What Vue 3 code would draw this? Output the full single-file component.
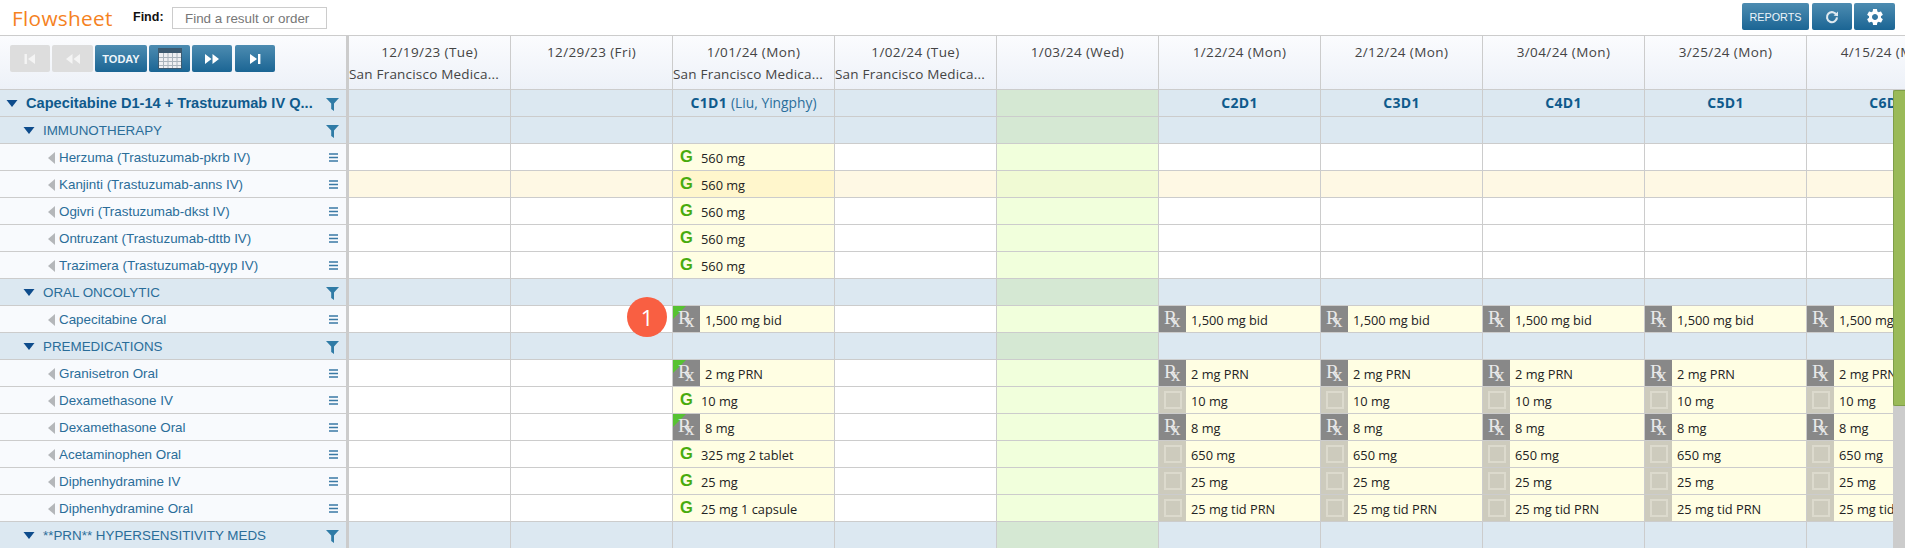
<script setup>
const dates = [
  { d: '12/19/23 (Tue)', s: 'San Francisco Medica...' },
  { d: '12/29/23 (Fri)' },
  { d: '1/01/24 (Mon)', s: 'San Francisco Medica...' },
  { d: '1/02/24 (Tue)', s: 'San Francisco Medica...' },
  { d: '1/03/24 (Wed)' },
  { d: '1/22/24 (Mon)' },
  { d: '2/12/24 (Mon)' },
  { d: '3/04/24 (Mon)' },
  { d: '3/25/24 (Mon)' },
  { d: '4/15/24 (Mon)' }
]
const TODAY = 4
const later = [5, 6, 7, 8, 9]

function fill(first, kind, text) {
  const cells = {}
  cells[2] = first
  later.forEach((i) => { if (kind) cells[i] = { k: kind, t: text } })
  return cells
}

const cyc = { 2: { cycle: 'C1D1', by: '(Liu, Yingphy)' } }
later.forEach((i, n) => { cyc[i] = { cycle: `C${n + 2}D1` } })

const rows = [
  { type: 'top', label: 'Capecitabine D1-14 + Trastuzumab IV Q...', cells: cyc },
  { type: 'group', label: 'IMMUNOTHERAPY', cells: {} },
  { type: 'drug', label: 'Herzuma (Trastuzumab-pkrb IV)', cells: { 2: { k: 'g', t: '560 mg' } } },
  { type: 'drug', label: 'Kanjinti (Trastuzumab-anns IV)', warm: true, cells: { 2: { k: 'g', t: '560 mg' } } },
  { type: 'drug', label: 'Ogivri (Trastuzumab-dkst IV)', cells: { 2: { k: 'g', t: '560 mg' } } },
  { type: 'drug', label: 'Ontruzant (Trastuzumab-dttb IV)', cells: { 2: { k: 'g', t: '560 mg' } } },
  { type: 'drug', label: 'Trazimera (Trastuzumab-qyyp IV)', cells: { 2: { k: 'g', t: '560 mg' } } },
  { type: 'group', label: 'ORAL ONCOLYTIC', cells: {} },
  { type: 'drug', label: 'Capecitabine Oral', cells: fill({ k: 'rxg', t: '1,500 mg bid' }, 'rx', '1,500 mg bid') },
  { type: 'group', label: 'PREMEDICATIONS', cells: {} },
  { type: 'drug', label: 'Granisetron Oral', cells: fill({ k: 'rxg', t: '2 mg PRN' }, 'rx', '2 mg PRN') },
  { type: 'drug', label: 'Dexamethasone IV', cells: fill({ k: 'g', t: '10 mg' }, 'box', '10 mg') },
  { type: 'drug', label: 'Dexamethasone Oral', cells: fill({ k: 'rxg', t: '8 mg' }, 'rx', '8 mg') },
  { type: 'drug', label: 'Acetaminophen Oral', cells: fill({ k: 'g', t: '325 mg 2 tablet' }, 'box', '650 mg') },
  { type: 'drug', label: 'Diphenhydramine IV', cells: fill({ k: 'g', t: '25 mg' }, 'box', '25 mg') },
  { type: 'drug', label: 'Diphenhydramine Oral', cells: fill({ k: 'g', t: '25 mg 1 capsule' }, 'box', '25 mg tid PRN') },
  { type: 'group', label: '**PRN** HYPERSENSITIVITY MEDS', cells: {} }
]
</script>

<template>
  <div class="page">
    <header class="topbar">
      <h1 class="title">Flowsheet</h1>
      <label class="find">Find:</label>
      <input class="search" placeholder="Find a result or order" />
      <div class="top-actions">
        <button class="btn reports">REPORTS</button>
        <button class="btn w40">
          <svg width="14" height="14" viewBox="0 0 14 14" fill="none">
            <path d="M11.6 5.2A5 5 0 1 0 12 7.4" stroke="#dfe9f0" stroke-width="2.1" />
            <path d="M8.6 5.6 L13 6.2 L13 1.4 Z" fill="#dfe9f0" />
          </svg>
        </button>
        <button class="btn w41">
          <svg width="20" height="20" viewBox="0 0 24 24" fill="#fff">
            <path d="M19.14 12.94c.04-.3.06-.61.06-.94 0-.32-.02-.64-.07-.94l2.03-1.58c.18-.14.23-.41.12-.61l-1.92-3.32c-.12-.22-.37-.29-.59-.22l-2.39.96c-.5-.38-1.03-.7-1.62-.94l-.36-2.54c-.04-.24-.24-.41-.48-.41h-3.84c-.24 0-.43.17-.47.41l-.36 2.54c-.59.24-1.13.57-1.62.94l-2.39-.96c-.22-.08-.47 0-.59.22L2.74 8.87c-.12.21-.08.47.12.61l2.03 1.58c-.05.3-.09.63-.09.94s.02.64.07.94l-2.03 1.58c-.18.14-.23.41-.12.61l1.92 3.32c.12.22.37.29.59.22l2.39-.96c.5.38 1.03.7 1.62.94l.36 2.54c.05.24.24.41.48.41h3.84c.24 0 .44-.17.47-.41l.36-2.54c.59-.24 1.13-.56 1.62-.94l2.39.96c.22.08.47 0 .59-.22l1.92-3.32c.12-.22.07-.47-.12-.61l-2.01-1.58zM12 15.6c-1.98 0-3.6-1.62-3.6-3.6s1.62-3.6 3.6-3.6 3.6 1.62 3.6 3.6-1.62 3.6-3.6 3.6z" />
          </svg>
        </button>
      </div>
    </header>

    <div class="sheet">
      <div class="row head">
        <div class="left nav">
          <button class="btn off w40">
            <svg width="12" height="12" viewBox="0 0 12 12" fill="#f4f4f4"><rect x="0.5" y="1" width="2.4" height="10" /><path d="M11 1v10L4 6z" /></svg>
          </button>
          <button class="btn off w41">
            <svg width="16" height="12" viewBox="0 0 16 12" fill="#f4f4f4"><path d="M7.5 1v10L1 6zM15 1v10L8.500 6z" /></svg>
          </button>
          <button class="btn today">TODAY</button>
          <button class="btn w41">
            <svg width="24" height="21" viewBox="0 0 24 21">
              <rect x="0.500" y="0.500" width="23" height="20" fill="#eef0f2" stroke="#3c5a70" />
              <rect x="1" y="1" width="22" height="4" fill="#3c5a70" />
              <path d="M1 9.500h22M1 13.500h22M1 17.500h22M5.500 5v15M10 5v15M14.500 5v15M19 5v15" stroke="#a9b4bc" fill="none" />
            </svg>
          </button>
          <button class="btn w40">
            <svg width="16" height="12" viewBox="0 0 16 12" fill="#fff"><path d="M1 1v10l6.500-5zM8.500 1v10L15 6z" /></svg>
          </button>
          <button class="btn w40 mleft">
            <svg width="12" height="12" viewBox="0 0 12 12" fill="#fff"><path d="M1 1v10l7-5z" /><rect x="9" y="1" width="2.400" height="10" /></svg>
          </button>
        </div>
        <div v-for="col in dates" :key="col.d" class="cell date">
          <div class="date-main">{{ col.d }}</div>
          <div v-if="col.s" class="date-site">{{ col.s }}</div>
        </div>
      </div>

      <div v-for="r in rows" :key="r.label" class="row" :class="[r.type, { warm: r.warm }]">
        <div class="left label">
          <svg v-if="r.type !== 'drug'" class="tri" width="12" height="7" viewBox="0 0 12 7"><path d="M0.500 0h11L6 7z" fill="#0e4c8c" /></svg>
          <svg v-else class="back" width="7" height="12" viewBox="0 0 7 12"><path d="M7 0v12L0 6z" fill="#b4b7ba" /></svg>
          <span class="name">{{ r.label }}</span>
          <svg v-if="r.type !== 'drug'" class="funnel" width="13" height="13" viewBox="0 0 13 13"><path d="M0 0h13L8 5.500V13L5.200 11V5.500z" fill="#2f7ba6" /></svg>
          <svg v-else class="menu" width="9" height="9" viewBox="0 0 9 9"><path d="M0 1h9M0 4.500h9M0 8h9" stroke="#3a7aa5" stroke-width="1.400" /></svg>
        </div>
        <div
          v-for="(col, i) in dates"
          :key="col.d"
          class="cell"
          :class="{ now: i === TODAY, filled: r.cells[i] && r.cells[i].k, hot: r.warm && r.cells[i] }"
        >
          <template v-if="r.cells[i]">
            <div v-if="r.cells[i].cycle" class="cycle">
              <b>{{ r.cells[i].cycle }}</b><span v-if="r.cells[i].by" class="by">{{ r.cells[i].by }}</span>
            </div>
            <template v-else>
              <span v-if="r.cells[i].k === 'g'" class="g">G</span>
              <span v-else-if="r.cells[i].k === 'box'" class="box"><i></i></span>
              <span v-else class="rx" :class="{ flag: r.cells[i].k === 'rxg' }"><span class="rx-r">R</span><span class="rx-x">x</span></span>
              <span class="dose">{{ r.cells[i].t }}</span>
            </template>
          </template>
        </div>
      </div>

      <div class="badge">1</div>
      <div class="scroll"><div class="thumb"></div></div>
    </div>
  </div>
</template>

<style>
html, body { margin: 0; overflow: hidden; background: #fff; }
</style>

<style scoped>
.page { width: 1905px; height: 548px; overflow: hidden; font-family: "Liberation Sans", Arial, sans-serif; }

.topbar { height: 35px; display: flex; align-items: flex-start; }
.title { margin: 6px 0 0 12px; width: 121px; font: 400 20.800px/24px "Open Sans", sans-serif; color: #f5821f; letter-spacing: .3px; }
.find { margin-top: 10px; width: 39px; font-size: 12.500px; line-height: 14px; font-weight: 700; color: #111; }
.search { box-sizing: border-box; width: 155px; height: 22px; margin-top: 7px; padding: 0 12px; border: 1px solid #ccc; font: 13.400px "Liberation Sans", sans-serif; outline: none; }
.search::placeholder { color: #777; opacity: 1; }
.top-actions { margin-left: auto; margin-right: 10px; margin-top: 3px; display: flex; gap: 2px; }

.btn { box-sizing: border-box; height: 27px; padding: 0; border: 0; border-radius: 2px; display: flex; align-items: center; justify-content: center; background: linear-gradient(#4d8cb1, #1b6594); color: #eef5fa; font: 12px "Liberation Sans", sans-serif; }
.btn.off { background: #ddd; }
.w40 { width: 40px; }
.w41 { width: 41px; }
.today { width: 52px; font-size: 11px; font-weight: 700; }
.reports { width: 67px; margin-right: 1px; font-size: 10.800px; }
.mleft { margin-left: 1px; }

.sheet { position: relative; border-top: 1px solid #ccc; }
.row { display: flex; height: 27px; box-sizing: border-box; }
.row.head { height: 54px; }

.left { flex: none; width: 349px; box-sizing: border-box; border-right: 3px solid #ccc; border-bottom: 1px solid #ccc; }
.nav { display: flex; gap: 2px; padding: 9px 0 0 10px; background: linear-gradient(#fbfcfe, #edf1f8); }

.cell { flex: none; width: 162px; box-sizing: border-box; display: flex; align-items: stretch; border-right: 1px solid #ccc; border-bottom: 1px solid #ccc; background: #fff; font: 12.800px "Open Sans", sans-serif; color: #222; }
.date { display: block; padding: 5px 0 0; text-align: center; background: linear-gradient(#fbfcfe, #edf1f8); color: #444; }
.date-main { font-size: 13.500px; line-height: 23px; letter-spacing: .4px; }
.date-site { font-size: 13.500px; line-height: 20px; white-space: nowrap; letter-spacing: .2px; text-align: left; }

.label { display: flex; align-items: center; background: #f8fafd; color: #2a6d99; font-size: 13.400px; }
.name { flex: 1; min-width: 0; white-space: nowrap; }
.tri { flex: none; }
.back { flex: none; margin: 2px 4px 0 48px; }
.menu { flex: none; margin: 0 8px 0 0; }
.funnel { flex: none; margin: 2px 7px 0 0; }
.drug .name { margin-right: 8px; }

.top .label, .group .label { background: #dce8f1; }
.top .tri { margin: 0 8px 0 6px; }
.group .tri { margin: 0 8px 0 23px; }
.top .name { font-weight: 700; font-size: 14.600px; color: #0f5a8c; margin-right: 12px; }
.group .name { font-size: 13.400px; color: #2a6d99; }
.top .cell, .group .cell { background: #dce8f1; }
.top .cell.now, .group .cell.now { background: #d5e8d3; }
.drug .cell.now { background: #f1ffdc; }
.drug .cell.filled { background: #fffee3; }
.warm .cell { background: #fef8e4; }
.warm .cell.now { background: #f0fad4; }
.warm .cell.hot { background: #fff6cc; }

.cycle { flex: 1; text-align: center; line-height: 26px; font-size: 14px; color: #2b6f9c; }
.cycle b { color: #0f5a8c; letter-spacing: .3px; }
.by { margin-left: 4px; font-size: 13.800px; }

.g { flex: none; width: 28px; padding-left: 7px; box-sizing: border-box; font: 700 16.500px/24px "Liberation Sans", sans-serif; color: #48ab0e; }
.dose { line-height: 28px; white-space: nowrap; }
.rx { position: relative; flex: none; width: 27px; margin-right: 5px; background: #888; color: #e8e8e8; box-sizing: border-box; font-family: "Liberation Serif", serif; }
.rx-r { position: absolute; left: 5px; top: 0; font-size: 19.500px; line-height: 24px; }
.rx-x { position: absolute; left: 12px; top: 3px; font-size: 19px; line-height: 24px; }
.rx.flag::before { content: ""; position: absolute; left: 0; top: 0; border-style: solid; border-width: 13px 13px 0 0; border-color: #57c232 transparent transparent transparent; }
.box { flex: none; width: 27px; margin-right: 5px; background: #cdcbbd; display: flex; align-items: center; justify-content: center; }
.box i { display: block; box-sizing: border-box; width: 18px; height: 18px; border: 2px solid #dcdacd; }

.badge { position: absolute; left: 627px; top: 261px; width: 40px; height: 40px; border-radius: 50%; background: #f95f42; color: #fff; font: 22px/40px "Open Sans", sans-serif; text-align: center; }
.scroll { position: absolute; left: 1893px; top: 54px; width: 12px; height: 460px; background: #ccc; }
.thumb { box-sizing: border-box; height: 316px; background: #9aba58; border: 1px solid #7f9e48; border-right: 0; border-radius: 2px 0 0 2px; }
</style>
